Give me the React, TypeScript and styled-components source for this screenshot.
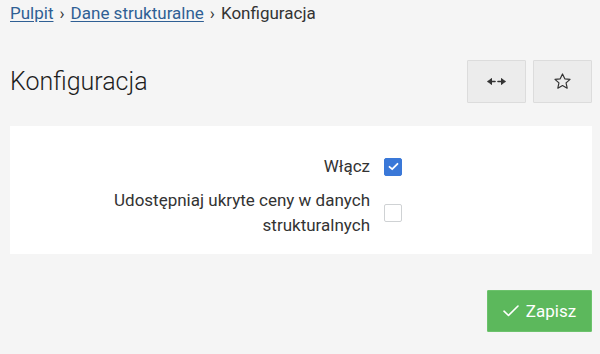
import React from "react";
import styled, { createGlobalStyle } from "styled-components";

const Global = createGlobalStyle`
  html, body { margin: 0; padding: 0; background: #f5f5f5; }
  body { font-family: Roboto, "Liberation Sans", sans-serif; color: #333; }
`;

const Page = styled.div`
  padding: 0 8px 0 10px;
`;

const Breadcrumb = styled.nav`
  display: flex;
  align-items: center;
  height: 26px;
  font-size: 17px;
  line-height: 26px;
`;

const Crumb = styled.a`
  color: #2f5f94;
  text-decoration: underline;
  text-underline-offset: 2px;
`;

const Sep = styled.span`
  margin: 0 6px;
  color: #333;
`;

const Current = styled.span`
  color: #333;
`;

const Header = styled.div`
  display: flex;
  align-items: center;
  justify-content: space-between;
  margin-top: 34px;
  height: 43px;
`;

const Title = styled.h1`
  margin: 0;
  font-size: 25px;
  font-weight: 300;
  color: #1e1e1e;
`;

const Tools = styled.div`
  display: flex;
  gap: 7px;
`;

const ToolButton = styled.button`
  width: 59px;
  height: 43px;
  display: flex;
  align-items: center;
  justify-content: center;
  background: #ececec;
  border: 1px solid #dcdcdc;
  border-radius: 1px;
  padding: 0;
  color: #333;
`;

const Panel = styled.div`
  margin-top: 23px;
  background: #fff;
  padding: 28px 0 16px;
  display: flex;
  flex-direction: column;
  gap: 9px;
`;

const Row = styled.label`
  display: grid;
  grid-template-columns: 360px 18px;
  column-gap: 14px;
  align-items: center;
`;

const Label = styled.span`
  justify-self: end;
  max-width: 272px;
  text-align: right;
  font-size: 17px;
  line-height: 25px;
  color: #333;
`;

const Box = styled.span<{ $checked?: boolean }>`
  width: 18px;
  height: 18px;
  box-sizing: border-box;
  border-radius: 2px;
  display: flex;
  align-items: center;
  justify-content: center;
  background: ${(p) => (p.$checked ? "#3a78d8" : "#fff")};
  border: 1px solid ${(p) => (p.$checked ? "#3a78d8" : "#cfd2d4")};
`;

const Footer = styled.div`
  display: flex;
  justify-content: flex-end;
  margin-top: 36px;
`;

const SaveButton = styled.button`
  display: flex;
  align-items: center;
  gap: 7px;
  height: 42px;
  width: 105px;
  justify-content: center;
  background: #5cb85c;
  border: 1px solid #6cc26c;
  border-radius: 1px;
  color: #fff;
  font-family: Roboto, "Liberation Sans", sans-serif;
  font-size: 17px;
  font-weight: 400;
  padding: 0;
`;

const Checkbox = ({ checked }: { checked?: boolean }) => (
  <Box $checked={checked}>
    {checked && (
      <svg width="11" height="9" viewBox="0 0 11 9">
        <path d="M1.5 4.8 L4.2 7.2 L9.5 1.8" fill="none" stroke="#fff" strokeWidth="1.8" strokeLinecap="round" strokeLinejoin="round" />
      </svg>
    )}
  </Box>
);

export default function App() {
  return (
    <Page>
      <Global />
      <Breadcrumb>
        <Crumb href="#">Pulpit</Crumb>
        <Sep>›</Sep>
        <Crumb href="#">Dane strukturalne</Crumb>
        <Sep>›</Sep>
        <Current>Konfiguracja</Current>
      </Breadcrumb>
      <Header>
        <Title>Konfiguracja</Title>
        <Tools>
          <ToolButton aria-label="Rozwiń">
            <svg width="19" height="9" viewBox="0 0 19 9">
              <path d="M1 4.5 H8" stroke="#333" strokeWidth="1.6" fill="none" strokeLinecap="round" />
              <path d="M1 4.5 L4.5 1.5 L4.5 7.5 Z" fill="#333" stroke="#333" strokeWidth="1" strokeLinejoin="round" />
              <path d="M18 4.5 H11" stroke="#333" strokeWidth="1.6" fill="none" strokeLinecap="round" />
              <path d="M18 4.5 L14.5 1.5 L14.5 7.5 Z" fill="#333" stroke="#333" strokeWidth="1" strokeLinejoin="round" />
            </svg>
          </ToolButton>
          <ToolButton aria-label="Ulubione">
            <svg width="19" height="19" viewBox="0 0 24 24">
              <path d="M12 2.5 L14.9 8.6 L21.5 9.3 L16.5 13.8 L17.9 20.4 L12 17.1 L6.1 20.4 L7.5 13.8 L2.5 9.3 L9.1 8.6 Z" fill="none" stroke="#333" strokeWidth="1.5" strokeLinejoin="round" />
            </svg>
          </ToolButton>
        </Tools>
      </Header>
      <Panel>
        <Row>
          <Label>Włącz</Label>
          <Checkbox checked />
        </Row>
        <Row>
          <Label>Udostępniaj ukryte ceny w danych strukturalnych</Label>
          <Checkbox />
        </Row>
      </Panel>
      <Footer>
        <SaveButton>
          <svg width="16" height="12" viewBox="0 0 16 12">
            <path d="M1 6.2 L5.5 10.5 L15 1" fill="none" stroke="#fff" strokeWidth="1.6" strokeLinecap="round" strokeLinejoin="round" />
          </svg>
          Zapisz
        </SaveButton>
      </Footer>
    </Page>
  );
}
